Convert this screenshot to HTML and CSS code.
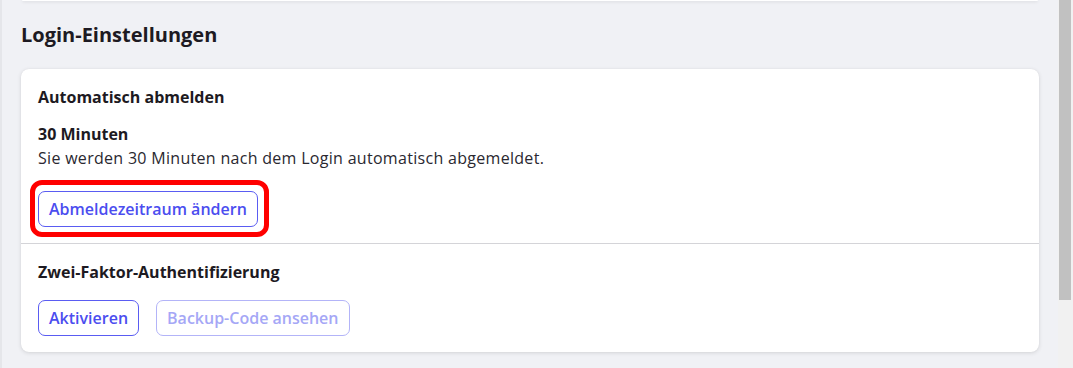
FILE: index.html
```html
<!DOCTYPE html>
<html lang="de">
<head>
<meta charset="utf-8">
<title>Login-Einstellungen</title>
<link rel="stylesheet" href="styles.css">
</head>
<body>
<div class="page">
  <div class="main">
    <div class="prev-card"></div>
    <h2 class="section-title">Login-Einstellungen</h2>
    <div class="card">
      <div class="card-section">
        <h3 class="item-title">Automatisch abmelden</h3>
        <div class="value">30 Minuten</div>
        <p class="desc">Sie werden 30 Minuten nach dem Login automatisch abgemeldet.</p>
        <div class="actions">
          <span class="highlight-wrap">
            <button class="btn">Abmeldezeitraum ändern</button>
            <span class="highlight"></span>
          </span>
        </div>
      </div>
      <div class="card-section">
        <h3 class="item-title">Zwei-Faktor-Authentifizierung</h3>
        <div class="actions actions-2fa">
          <button class="btn">Aktivieren</button>
          <button class="btn btn-disabled" disabled>Backup-Code ansehen</button>
        </div>
      </div>
    </div>
  </div>
  <div class="scrollbar"><div class="thumb"></div></div>
</div>
</body>
</html>
```
FILE: styles.css
```css
* { box-sizing: border-box; }
html, body { margin: 0; padding: 0; }
body {
  background: #f0f1f5;
  font-family: "Open Sans", "Liberation Sans", sans-serif;
  color: #1f1d24;
  height: 368px;
  overflow: hidden;
}
.page {
  display: flex;
  height: 368px;
}
.main {
  flex: 1;
  border-left: 2px solid #e5e6ea;
  padding: 0 19px 0 19px;
}
.prev-card {
  height: 1px;
  margin: 0 1px 0 1px;
  background: #ffffff;
  border-radius: 0 0 8px 8px;
  box-shadow: 0 1px 3px rgba(0,0,0,0.15);
}
.section-title {
  margin: 22px 0 22px 0;
  font-size: 20px;
  line-height: 24px;
  font-weight: 700;
  color: #1d1a22;
}
.card {
  background: #ffffff;
  border-radius: 8px;
  box-shadow: 0 1px 4px rgba(0,0,0,0.12), 0 0 1px rgba(0,0,0,0.08);
}
.card-section {
  padding: 17px 17px 16px 17px;
}
.card-section + .card-section {
  border-top: 1px solid #d4d4d8;
}
.item-title {
  margin: 0;
  font-size: 16px;
  line-height: 22px;
  font-weight: 700;
  color: #1d1a22;
}
.value {
  margin-top: 15px;
  font-size: 16px;
  line-height: 22px;
  font-weight: 700;
  color: #1d1a22;
}
.desc {
  margin: 2px 0 0 0;
  font-size: 16px;
  line-height: 22px;
  letter-spacing: 0.3px;
  color: #2a2830;
}
.actions {
  display: flex;
  gap: 17px;
  margin-top: 22px;
}
.actions-2fa {
  margin-top: 17px;
}
.highlight-wrap {
  position: relative;
  display: inline-flex;
}
.highlight {
  position: absolute;
  left: -8px;
  right: -11px;
  top: -11px;
  bottom: -10px;
  border: 5px solid #ff0000;
  border-radius: 12px;
  pointer-events: none;
}
.btn {
  height: 36px;
  padding: 0 10px;
  background: #ffffff;
  border: 1px solid #5a5cf2;
  border-radius: 7px;
  color: #4b4def;
  font-family: "Open Sans", "Liberation Sans", sans-serif;
  font-size: 16px;
  font-weight: 600;
}
.btn-disabled {
  border-color: #b3b4f8;
  color: #a5a7f6;
}
.scrollbar {
  width: 15px;
  background: #f1f1f1;
  padding-left: 1px;
  padding-right: 2px;
}
.thumb {
  height: 300px;
  background: #c1c1c1;
}
```
